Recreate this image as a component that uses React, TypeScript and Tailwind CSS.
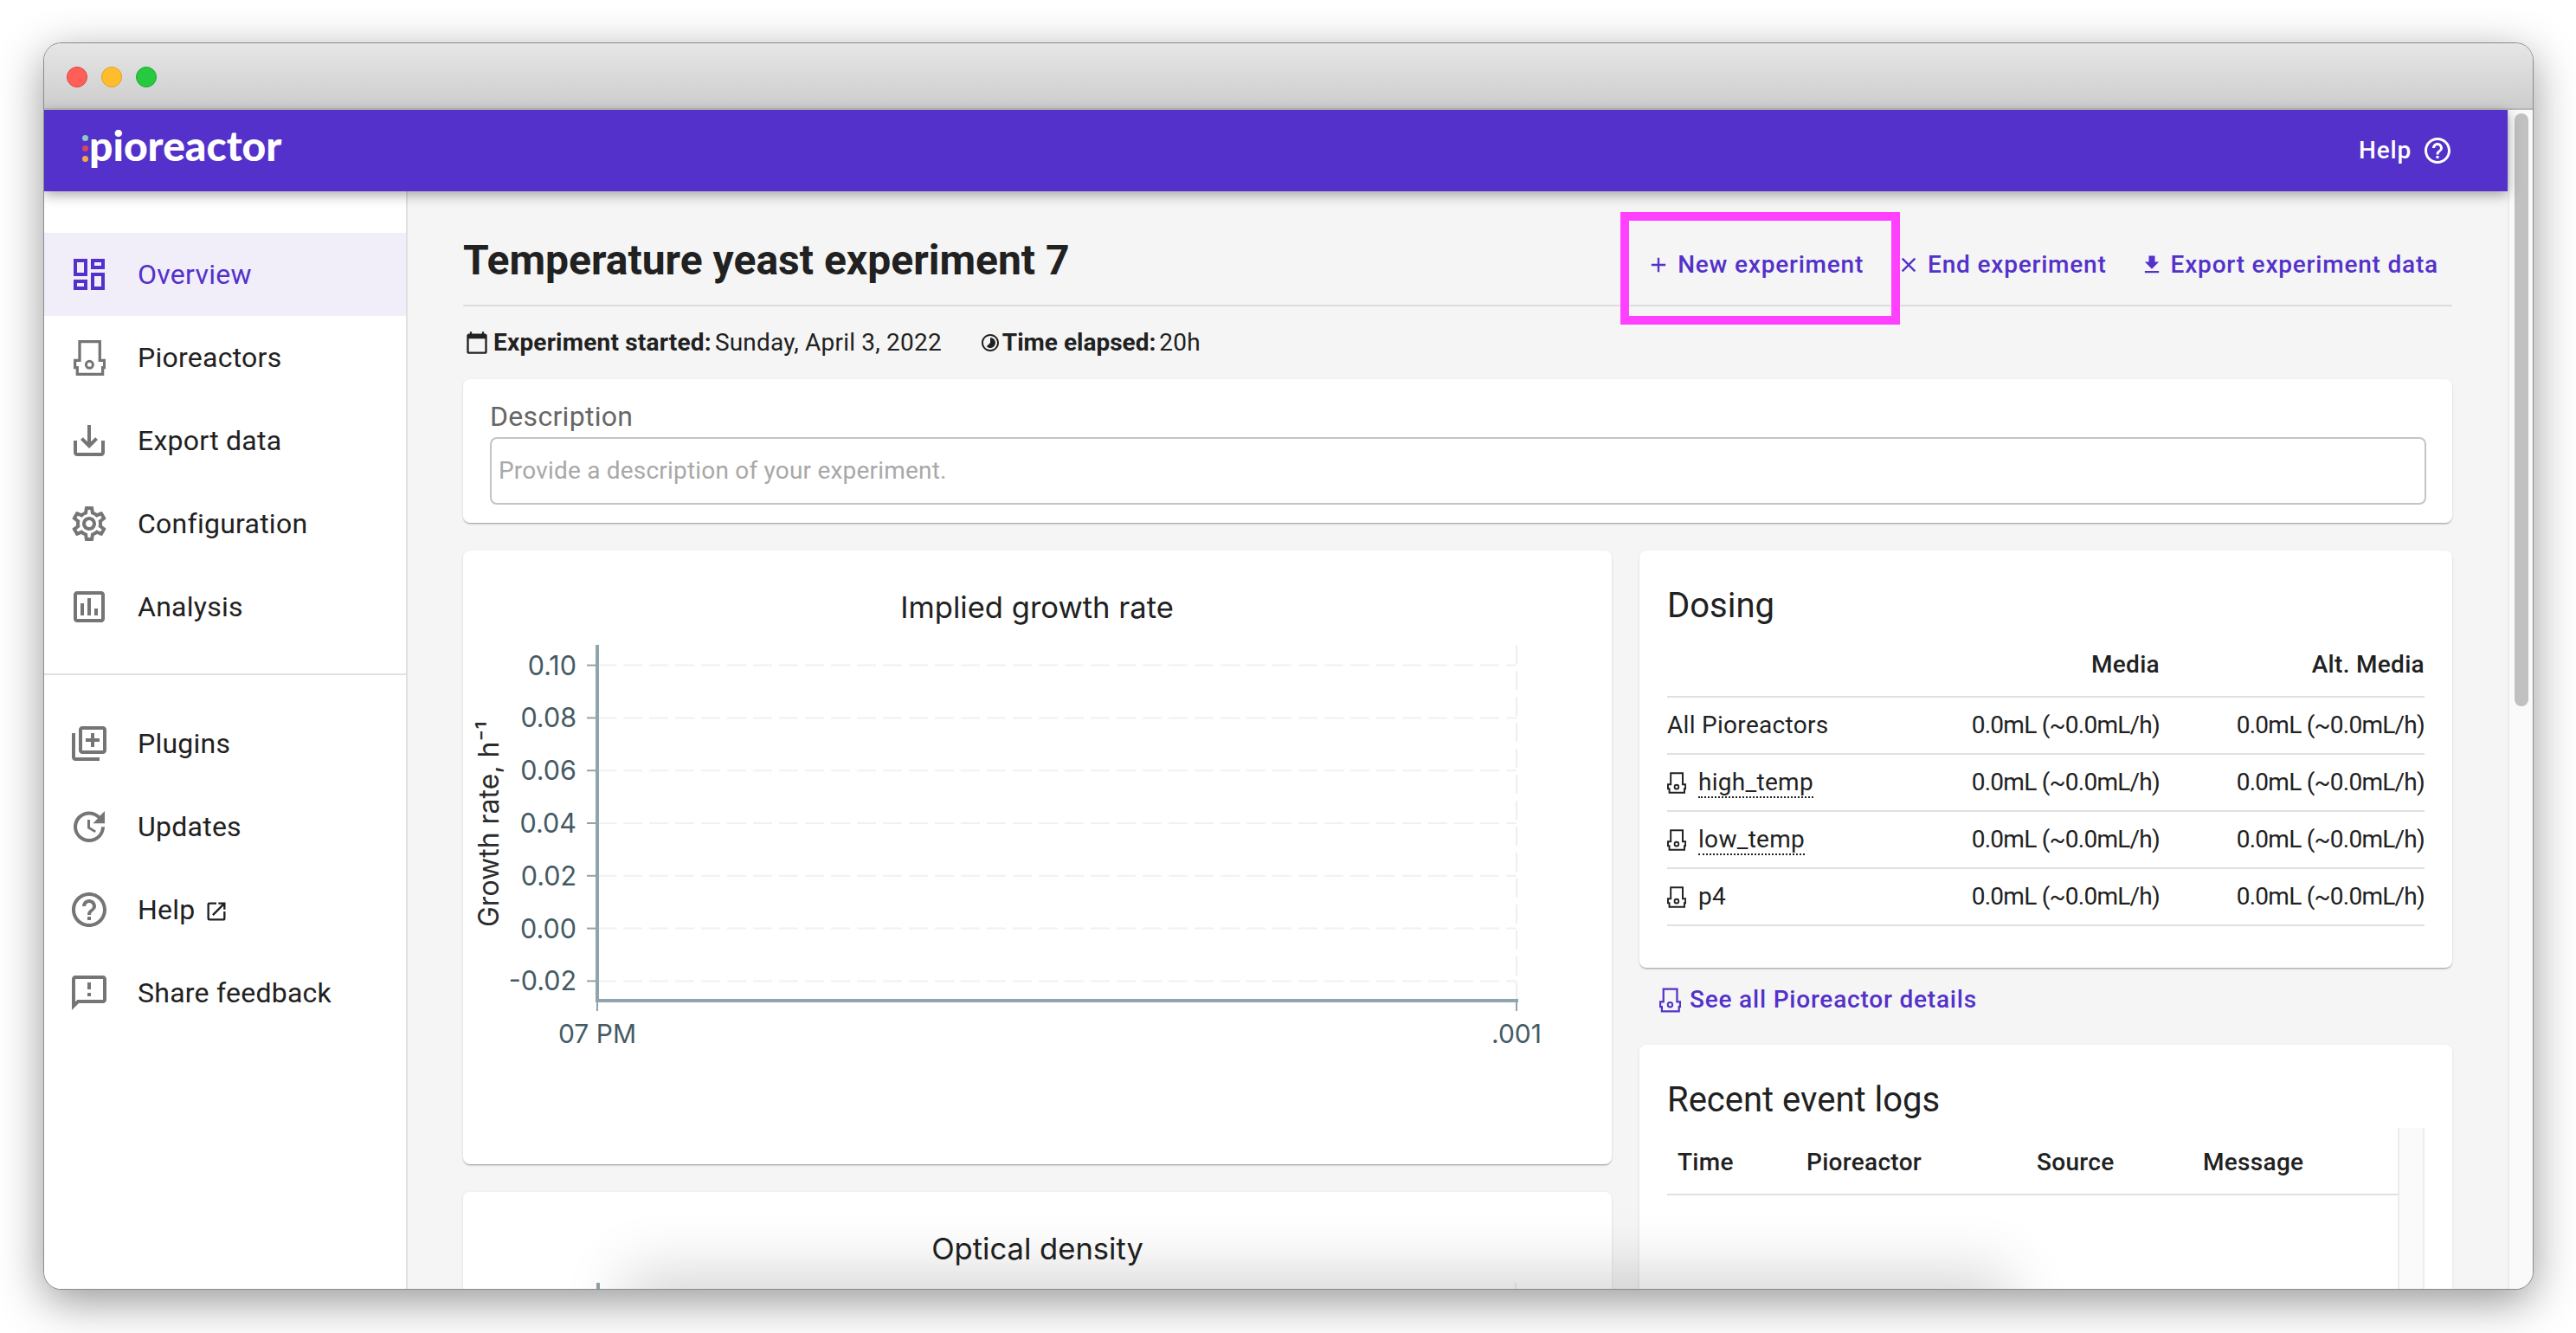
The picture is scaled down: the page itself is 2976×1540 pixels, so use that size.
import type { ReactNode } from "react";
import {
  MdAdd,
  MdCalendarToday,
  MdClose,
  MdFileDownload,
  MdHelpOutline,
  MdOpenInNew,
  MdOutlineDashboard,
  MdOutlineFeedback,
  MdOutlineInsertChart,
  MdOutlineLibraryAdd,
  MdOutlineSaveAlt,
  MdOutlineSettings,
  MdTimelapse,
  MdUpdate,
} from "react-icons/md";

function PioreactorIcon({ className }: { className?: string }) {
  return (
    <svg viewBox="0 0 37 41" fill="none" stroke="currentColor" strokeWidth="3.3" className={className}>
      <path d="M7 1.6H30.3V23.3H35.6V31.7H33.6V39.4H4.3V31.7H1.6V23.3H7Z" />
      <circle cx="18.4" cy="28.3" r="4" strokeWidth="3" />
    </svg>
  );
}

function NavItem({ icon, label, active, extra }: { icon: ReactNode; label: string; active?: boolean; extra?: ReactNode }) {
  return (
    <div className={`flex h-[96px] items-center pl-[32px] ${active ? "bg-[#f1eefa]" : ""}`}>
      <div className={`flex w-[40px] items-center justify-center ${active ? "text-[#5331ca]" : "text-[#757575]"}`}>{icon}</div>
      <span className={`ml-[36px] text-[32px] tracking-[0.25px] ${active ? "text-[#5331ca]" : "text-[#212121]"}`}>{label}</span>
      {extra}
    </div>
  );
}

function ActionLink({ icon, label }: { icon: ReactNode; label: string }) {
  return (
    <div className="flex items-center gap-[8px] text-[28px] font-medium tracking-[0.8px] text-[#5331ca]">
      {icon}
      <span>{label}</span>
    </div>
  );
}

function Chart() {
  const ticks = ["0.10", "0.08", "0.06", "0.04", "0.02", "0.00", "-0.02"];
  return (
    <svg viewBox="0 0 1327 709" className="block h-[709px] w-[1327px] [font-family:Inter,sans-serif]">
      <text x="663" y="78" textAnchor="middle" fontSize="34.6" fill="#212121">
        Implied growth rate
      </text>
      {ticks.map((t, i) => {
        const y = 132.6 + i * 60.8;
        return (
          <g key={t}>
            <line x1="155" x2="1217" y1={y} y2={y} stroke="#eff1f2" strokeWidth="2" strokeDasharray="22 8" />
            <line x1="143" x2="155" y1={y} y2={y} stroke="#90a4ae" strokeWidth="2" />
            <text x="131" y={y + 11} textAnchor="end" fontSize="30.5" fill="#455a64">
              {t}
            </text>
          </g>
        );
      })}
      <line x1="1217" x2="1217" y1="109" y2="520" stroke="#eceff1" strokeWidth="2" strokeDasharray="22 8" />
      <line x1="155" x2="155" y1="109" y2="522" stroke="#90a4ae" strokeWidth="4" />
      <line x1="153" x2="1219" y1="520" y2="520" stroke="#90a4ae" strokeWidth="4" />
      <line x1="155" x2="155" y1="520" y2="532" stroke="#90a4ae" strokeWidth="2" />
      <line x1="1217" x2="1217" y1="520" y2="532" stroke="#90a4ae" strokeWidth="2" />
      <text x="155" y="569" textAnchor="middle" fontSize="30" fill="#455a64">
        07 PM
      </text>
      <text x="1217" y="569" textAnchor="middle" fontSize="30" fill="#455a64">
        .001
      </text>
      <text transform="translate(41 316) rotate(-90)" textAnchor="middle" fontSize="32" fill="#2b2b2b">
        Growth rate, h⁻¹
      </text>
    </svg>
  );
}

const dosingRows = [
  { name: "All Pioreactors", icon: false, dotted: false },
  { name: "high_temp", icon: true, dotted: true },
  { name: "low_temp", icon: true, dotted: true },
  { name: "p4", icon: true, dotted: false },
];

export default function App() {
  return (
    <div className="h-[1540px] w-[2976px] overflow-hidden bg-white pl-[51px] pt-[50px] [font-family:Roboto,sans-serif]">
      <div className="relative flex h-[1439px] w-[2875px] flex-col overflow-hidden rounded-[20px] shadow-[0_0_0_1px_#8c8c8c,0_14px_52px_rgba(0,0,0,0.42)]">
        <div className="flex h-[77px] shrink-0 items-center gap-[16px] border-b-2 border-[#b9b9b9] bg-gradient-to-b from-[#e6e6e6] to-[#cdcdcd] pl-[26px] pt-[3px]">
          <div className="h-[24px] w-[24px] rounded-full border border-[#e0443e] bg-[#ff5f57]" />
          <div className="h-[24px] w-[24px] rounded-full border border-[#dea123] bg-[#ffbd2e]" />
          <div className="h-[24px] w-[24px] rounded-full border border-[#1aab29] bg-[#27c93f]" />
        </div>

        <div className="flex min-h-0 flex-1">
          <div className="relative flex min-w-0 flex-1 flex-col">
            <header className="relative z-10 flex h-[94px] shrink-0 items-center justify-between bg-[#5331ca] pl-[44px] pr-[63px] shadow-[0_4px_14px_rgba(0,0,0,0.35)]">
              <div className="mb-[12px] flex items-center">
                <div className="mr-[1px] flex flex-col gap-[5px] pt-[6px]">
                  <div className="h-[7px] w-[7px] rounded-full bg-[#8fc9c4]" />
                  <div className="h-[7px] w-[7px] rounded-full bg-[#d2495f]" />
                  <div className="h-[7px] w-[7px] rounded-full bg-[#f2a94a]" />
                </div>
                <span className="text-[48px] leading-none font-black text-white [font-family:Lato,sans-serif]">pioreactor</span>
              </div>
              <div className="flex items-center gap-[12px] text-[28px] font-medium tracking-[0.8px] text-white">
                <span>Help</span>
                <MdHelpOutline className="h-[36px] w-[36px]" />
              </div>
            </header>

            <div className="flex min-h-0 flex-1">
              <nav className="w-[420px] shrink-0 border-r-2 border-[#e0e0e0] bg-white pt-[48px]">
                <NavItem active icon={<MdOutlineDashboard className="h-[48px] w-[48px] shrink-0" />} label="Overview" />
                <NavItem icon={<PioreactorIcon className="h-[41px] w-[37px]" />} label="Pioreactors" />
                <NavItem icon={<MdOutlineSaveAlt className="h-[48px] w-[48px] shrink-0" />} label="Export data" />
                <NavItem icon={<MdOutlineSettings className="h-[48px] w-[48px] shrink-0" />} label="Configuration" />
                <NavItem icon={<MdOutlineInsertChart className="h-[48px] w-[48px] shrink-0" />} label="Analysis" />
                <div className="mb-[31px] mt-[29px] h-[2px] bg-[#e0e0e0]" />
                <NavItem icon={<MdOutlineLibraryAdd className="h-[48px] w-[48px] shrink-0" />} label="Plugins" />
                <NavItem icon={<MdUpdate className="h-[48px] w-[48px] shrink-0" />} label="Updates" />
                <NavItem
                  icon={<MdHelpOutline className="h-[48px] w-[48px] shrink-0" />}
                  label="Help"
                  extra={<MdOpenInNew className="ml-[10px] mt-[4px] h-[28px] w-[28px] text-[#212121]" />}
                />
                <NavItem icon={<MdOutlineFeedback className="h-[48px] w-[48px] shrink-0" />} label="Share feedback" />
              </nav>

              <main className="min-w-0 flex-1 overflow-hidden bg-[#f5f5f5] pl-[64px] pr-[64px] text-[#212121]">
                <div className="flex h-[133px] items-start justify-between border-b-2 border-[#dcdcdc] pr-[16px]">
                  <h1 className="mt-[51px] text-[48px] leading-[58px] font-bold">Temperature yeast experiment 7</h1>
                  <div className="mt-[67px] flex h-[36px] items-center gap-[38px]">
                    <ActionLink icon={<MdAdd className="h-[28px] w-[28px]" />} label="New experiment" />
                    <ActionLink icon={<MdClose className="h-[28px] w-[28px]" />} label="End experiment" />
                    <ActionLink icon={<MdFileDownload className="h-[28px] w-[28px]" />} label="Export experiment data" />
                  </div>
                </div>

                <div className="mb-[28px] mt-[28px] flex h-[28px] items-center text-[28px] tracking-[0.2px]">
                  <MdCalendarToday className="ml-[2px] mr-[5px] h-[28px] w-[28px]" />
                  <b className="font-bold">Experiment started:</b>
                  <span className="ml-[4px]">Sunday, April 3, 2022</span>
                  <MdTimelapse className="ml-[44px] h-[24px] w-[24px]" />
                  <b className="ml-[2px] font-bold tracking-[0px]">Time elapsed:</b>
                  <span className="ml-[4px]">20h</span>
                </div>

                <section className="h-[166px] rounded-[8px] bg-white pl-[31px] pr-[30px] pt-[23px] shadow-[0_2px_2px_-1px_rgba(0,0,0,0.3),0_1px_3px_rgba(0,0,0,0.12)]">
                  <div className="h-[40px] text-[32px] leading-[40px] tracking-[0.3px] text-[#666666]">Description</div>
                  <div className="mt-[4px] flex h-[78px] items-center rounded-[8px] border-2 border-[#c4c4c4] pl-[8px] text-[28px] tracking-[0.2px] text-[#a8a8a8]">
                    Provide a description of your experiment.
                  </div>
                </section>

                <div className="mt-[32px] flex gap-[32px]">
                  <div className="w-[1327px] shrink-0">
                    <section className="h-[709px] rounded-[8px] bg-white shadow-[0_2px_2px_-1px_rgba(0,0,0,0.3),0_1px_3px_rgba(0,0,0,0.12)]">
                      <Chart />
                    </section>
                    <section className="mt-[32px] h-[400px] rounded-[8px] bg-white pt-[45px] shadow-[0_1px_3px_rgba(0,0,0,0.12)]">
                      <div className="text-center text-[34.6px] leading-[40px] [font-family:Inter,sans-serif]">Optical density</div>
                      <div className="ml-[154px] mt-[20px] flex h-[20px] w-[1063px] justify-between">
                        <div className="w-[4px] bg-[#90a4ae]" />
                        <div className="w-[2px] bg-[#eceff1]" />
                      </div>
                    </section>
                  </div>

                  <div className="min-w-0 flex-1">
                    <section className="h-[482px] rounded-[8px] bg-white px-[32px] pt-[36px] shadow-[0_2px_2px_-1px_rgba(0,0,0,0.3),0_1px_3px_rgba(0,0,0,0.12)]">
                      <h2 className="h-[56px] text-[40px] leading-[56px]">Dosing</h2>
                      <div className="flex h-[78px] items-center justify-end border-b-2 border-[#e0e0e0] pt-[3px] text-[28px] font-medium tracking-[0.3px]">
                        <span className="w-[320px] text-right">Media</span>
                        <span className="w-[306px] text-right">Alt. Media</span>
                      </div>
                      {dosingRows.map((row) => (
                        <div key={row.name} className="flex h-[66px] items-center border-b-2 border-[#e0e0e0] text-[28px] tracking-[0.3px]">
                          <div className="flex flex-1 items-center">
                            {row.icon && <PioreactorIcon className="mr-[14px] h-[25px] w-[22px]" />}
                            <span className={row.dotted ? "border-b-2 border-dotted border-[#212121] leading-[33px]" : ""}>{row.name}</span>
                          </div>
                          <span className="w-[320px] text-right tracking-[-0.75px]">0.0mL (~0.0mL/h)</span>
                          <span className="w-[306px] text-right tracking-[-0.75px]">0.0mL (~0.0mL/h)</span>
                        </div>
                      ))}
                    </section>

                    <div className="mb-[34px] ml-[23px] mt-[19px] flex h-[36px] items-center text-[28px] font-medium tracking-[0.8px] text-[#5331ca]">
                      <PioreactorIcon className="mr-[10px] h-[29px] w-[25px]" />
                      See all Pioreactor details
                    </div>

                    <section className="h-[400px] rounded-[8px] bg-white px-[32px] pt-[36px] shadow-[0_1px_3px_rgba(0,0,0,0.12)]">
                      <h2 className="h-[56px] text-[40px] leading-[56px]">Recent event logs</h2>
                      <div className="mt-[4px] flex h-[300px]">
                        <div className="min-w-0 flex-1">
                          <div className="grid h-[78px] grid-cols-[149px_266px_192px_1fr] items-center border-b-2 border-[#e0e0e0] pl-[12px] pt-[3px] text-[28px] font-medium tracking-[0.3px]">
                            <span>Time</span>
                            <span>Pioreactor</span>
                            <span>Source</span>
                            <span>Message</span>
                          </div>
                        </div>
                        <div className="w-[31px] shrink-0 border-x-2 border-[#ececec] bg-[#fafafa]" />
                      </div>
                    </section>
                  </div>
                </div>
              </main>
            </div>
          </div>

          <div className="w-[29px] shrink-0 border-l-2 border-[#ececec] bg-[#fafafa] pl-[6px] pt-[4px]">
            <div className="h-[685px] w-[16px] rounded-full bg-[#c1c1c1]" />
          </div>
        </div>

        {/* highlight drawn over the screenshot */}
        <div className="absolute left-[1821px] top-[195px] h-[130px] w-[323px] border-[10px] border-[#ff40ff]" />
        {/* shadow of something sitting just below the window */}
        <div className="pointer-events-none absolute left-[690px] top-[1439px] z-20 h-[60px] w-[1560px] shadow-[0_0_70px_20px_rgba(0,0,0,0.16)]" />
      </div>
    </div>
  );
}
